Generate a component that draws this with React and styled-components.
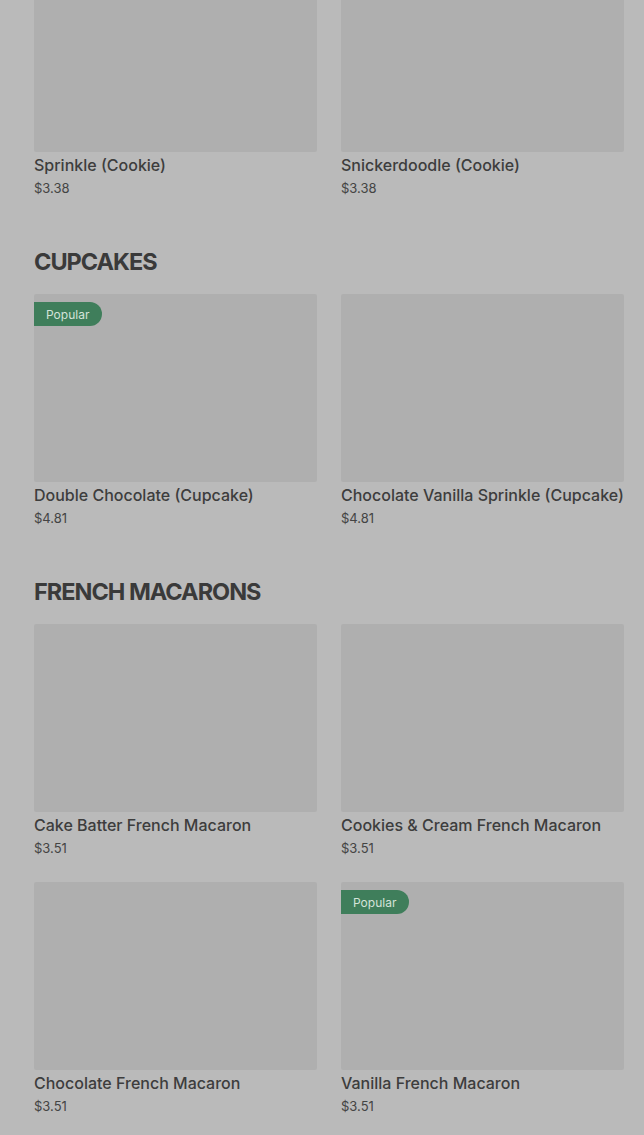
import styled, { createGlobalStyle } from 'styled-components';

const Global = createGlobalStyle`
  html, body {
    margin: 0;
    padding: 0;
    background: #bababa;
  }
  body {
    font-family: Inter, "Noto Sans", "Liberation Sans", sans-serif;
    color: #3b3b3b;
  }
`;

const Page = styled.main`
  padding: 0 20px 0 34px;
  margin-top: -36px;
  height: 1171px;
  overflow: hidden;
`;

const Section = styled.section`
  & + & {
    margin-top: 48px;
  }
`;

const Heading = styled.h2`
  margin: 0 0 16px;
  font-size: 23.5px;
  line-height: 32px;
  font-weight: 700;
  letter-spacing: -1px;
  color: #3a3a3a;
`;

const Grid = styled.div`
  display: grid;
  grid-template-columns: 1fr 1fr;
  column-gap: 24px;
  row-gap: 24px;
`;

const Card = styled.div`
  display: flex;
  flex-direction: column;
`;

const Thumb = styled.div`
  position: relative;
  height: 188px;
  background: #afafaf;
  border-radius: 2px;
`;

const Badge = styled.span`
  position: absolute;
  top: 8px;
  left: 0;
  height: 24px;
  padding: 0 13px 0 12px;
  display: flex;
  align-items: center;
  background: #3f7e5b;
  color: #d4e3d9;
  font-size: 12px;
  border-radius: 0 12px 12px 0;
`;

const Name = styled.div`
  margin-top: 1px;
  font-size: 16px;
  line-height: 24px;
  font-weight: 500;
  color: #3d3d3d;
  white-space: nowrap;
`;

const Price = styled.div`
  margin-top: 1px;
  font-size: 13px;
  line-height: 20px;
  color: #444;
`;

const sections = [
  {
    title: null,
    items: [
      { name: 'Sprinkle (Cookie)', price: '$3.38' },
      { name: 'Snickerdoodle (Cookie)', price: '$3.38' },
    ],
  },
  {
    title: 'CUPCAKES',
    items: [
      { name: 'Double Chocolate (Cupcake)', price: '$4.81', popular: true },
      { name: 'Chocolate Vanilla Sprinkle (Cupcake)', price: '$4.81' },
    ],
  },
  {
    title: 'FRENCH MACARONS',
    items: [
      { name: 'Cake Batter French Macaron', price: '$3.51' },
      { name: 'Cookies & Cream French Macaron', price: '$3.51' },
      { name: 'Chocolate French Macaron', price: '$3.51' },
      { name: 'Vanilla French Macaron', price: '$3.51', popular: true },
    ],
  },
];

export default function App() {
  return (
    <>
      <Global />
      <Page>
        {sections.map((s, i) => (
          <Section key={i}>
            {s.title && <Heading>{s.title}</Heading>}
            <Grid>
              {s.items.map((it) => (
                <Card key={it.name}>
                  <Thumb>{it.popular && <Badge>Popular</Badge>}</Thumb>
                  <Name>{it.name}</Name>
                  <Price>{it.price}</Price>
                </Card>
              ))}
            </Grid>
          </Section>
        ))}
      </Page>
    </>
  );
}
